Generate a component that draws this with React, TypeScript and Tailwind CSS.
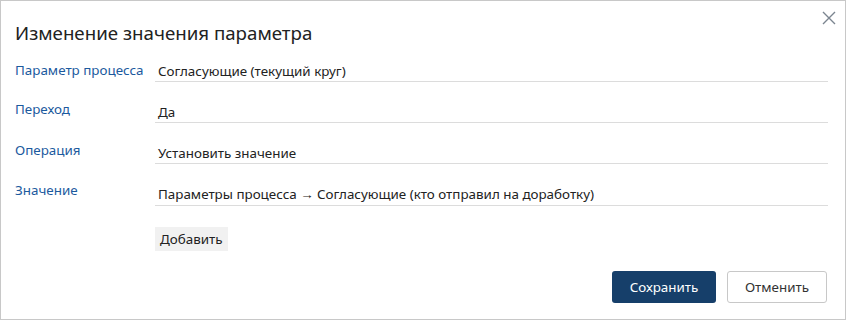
import React from "react";

const rows = [
  { label: "Параметр процесса", value: "Согласующие (текущий круг)" },
  { label: "Переход", value: "Да" },
  { label: "Операция", value: "Установить значение" },
];

export default function App() {
  return (
    <div
      className="relative w-[846px] h-[320px] bg-white border border-[#c8c8c8] text-[#222]"
      style={{ fontFamily: '"Noto Sans", "Open Sans", sans-serif' }}
    >
      <button className="absolute right-[9px] top-[9px] w-[15px] h-[15px] flex items-center justify-center">
        <svg width="14" height="14" viewBox="0 0 14 14">
          <path d="M1 1L13 13M13 1L1 13" stroke="#7b8590" strokeWidth="1.4" />
        </svg>
      </button>
      <div className="pl-[14px] pr-[17px] pt-[18px]">
        <h1 className="text-[18.7px] leading-[28px] text-[#222]">Изменение значения параметра</h1>
        <div className="mt-[4px] flex flex-col gap-[10px]">
          {rows.map((r, i) => (
            <div key={r.label} className="flex">
              <div className={`w-[140px] ${i === 0 ? "pt-[9px]" : "pt-[7px]"} text-[13.4px] leading-[20px] text-[#1c5a9e]`}>{r.label}</div>
              <div className="flex-1 h-[31px] border-b border-[#dcdcdc] pl-[3px] pt-[10px] text-[13.4px] leading-[20px]">
                {r.value}
              </div>
            </div>
          ))}
          <div className="flex">
            <div className="w-[140px] pt-[6px] text-[13.4px] leading-[20px] text-[#1c5a9e]">Значение</div>
            <div className="flex-1 h-[32px] border-b border-[#dcdcdc] pl-[3px] pt-[10px] text-[13.4px] leading-[20px]">
              Параметры процесса → Согласующие (кто отправил на доработку)
            </div>
          </div>
        </div>
        <div className="flex pl-[140px] mt-[21px]">
          <button className="h-[24px] px-[5px] bg-[#f1f1f1] text-[13.4px] leading-[20px] text-[#222]">Добавить</button>
        </div>
        <div className="mt-[20px] flex justify-end gap-[11px] pr-[1px]">
          <button className="w-[104px] h-[32px] rounded-[3px] bg-[#163f6a] text-white text-[13.4px]">Сохранить</button>
          <button className="w-[100px] h-[32px] rounded-[3px] border border-[#c8c8c8] bg-white text-[#333] text-[13.4px]">Отменить</button>
        </div>
      </div>
    </div>
  );
}
